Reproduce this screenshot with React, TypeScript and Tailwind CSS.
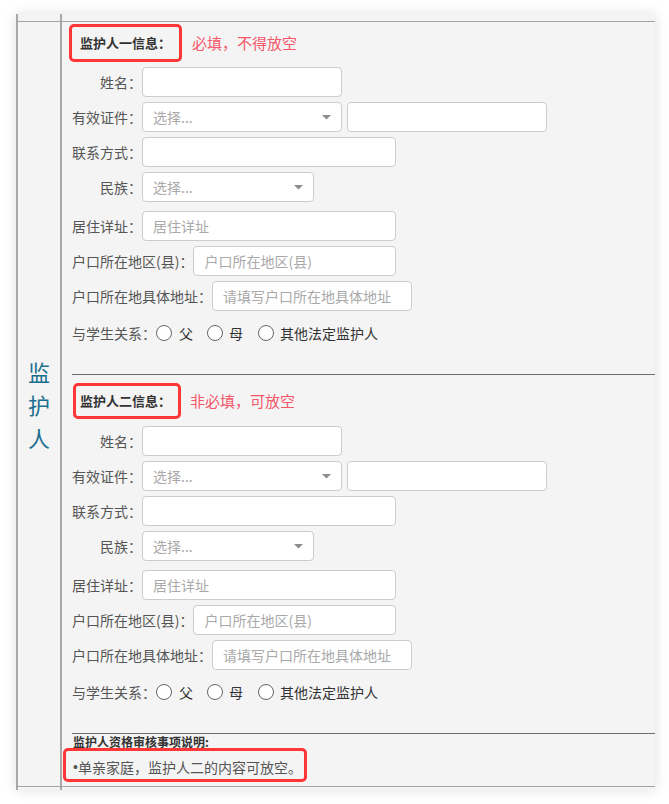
import React from "react";

const inputCls =
  "h-[30px] shrink-0 rounded-[4px] border border-[#cccccc] bg-white px-[10px] text-[14px] text-[#555] placeholder:text-[#a9a9a9] outline-none";

function Caret() {
  return (
    <svg width="9" height="5" viewBox="0 0 9 5" className="shrink-0">
      <path d="M0 0 L9 0 L4.5 4.5 Z" fill="#8c8c8c" />
    </svg>
  );
}

function FakeSelect({ w }: { w: string }) {
  return (
    <div
      className={`${w} flex h-[30px] shrink-0 items-center justify-between rounded-[4px] border border-[#cccccc] bg-white pl-[10px] pr-[10px] text-[14px] text-[#a9a9a9]`}
    >
      <span>选择...</span>
      <Caret />
    </div>
  );
}

function FixedLabel({ children }: { children: React.ReactNode }) {
  return <span className="w-[70px] shrink-0 text-right text-[14px] text-[#555]">{children}</span>;
}

function InlineLabel({ children }: { children: React.ReactNode }) {
  return <span className="shrink-0 text-[14px] text-[#555]">{children}</span>;
}

function Radio() {
  return <span className="h-[16px] w-[16px] shrink-0 rounded-full border border-[#666] bg-white" />;
}

function Rows() {
  return (
    <div className="flex flex-col gap-[5px]">
      <div className="flex h-[30px] items-center">
        <FixedLabel>姓名：</FixedLabel>
        <input className={`${inputCls} w-[200px]`} />
      </div>
      <div className="flex h-[30px] items-center">
        <FixedLabel>有效证件：</FixedLabel>
        <FakeSelect w="w-[200px]" />
        <input className={`${inputCls} ml-[5px] w-[200px]`} />
      </div>
      <div className="flex h-[30px] items-center">
        <FixedLabel>联系方式：</FixedLabel>
        <input className={`${inputCls} w-[254px]`} />
      </div>
      <div className="flex h-[30px] items-center">
        <FixedLabel>民族：</FixedLabel>
        <FakeSelect w="w-[172px]" />
      </div>
      <div className="mt-[4px] flex h-[30px] items-center">
        <InlineLabel>居住详址：</InlineLabel>
        <input className={`${inputCls} w-[254px]`} placeholder="居住详址" />
      </div>
      <div className="flex h-[30px] items-center">
        <InlineLabel>户口所在地区(县)：</InlineLabel>
        <input className={`${inputCls} w-[203px]`} placeholder="户口所在地区(县)" />
      </div>
      <div className="flex h-[30px] items-center">
        <InlineLabel>户口所在地具体地址：</InlineLabel>
        <input className={`${inputCls} w-[200px]`} placeholder="请填写户口所在地具体地址" />
      </div>
      <div className="mt-[2px] flex h-[30px] items-center text-[14px]">
        <InlineLabel>与学生关系：</InlineLabel>
        <Radio />
        <span className="ml-[7px] text-[#333]">父</span>
        <span className="ml-[14px] flex items-center">
          <Radio />
        </span>
        <span className="ml-[6px] text-[#333]">母</span>
        <span className="ml-[15px] flex items-center">
          <Radio />
        </span>
        <span className="ml-[6px] text-[#333]">其他法定监护人</span>
      </div>
    </div>
  );
}

function Side() {
  return <div className="w-[46px] shrink-0 border-x-2 border-[#a8a8a8]" />;
}

export default function App() {
  return (
    <div className="min-h-[804px] bg-white pl-[16px] pt-[14px] font-['Noto_Sans_CJK_SC','Microsoft_YaHei',sans-serif]">
      <div className="w-[639px] bg-[#f4f4f4] shadow-[0_0_12px_rgba(0,0,0,0.13)]">
        <div className="flex h-[7px]">
          <Side />
        </div>
        <div className="flex border-y border-[#a3a3a3]">
          <div className="flex w-[46px] shrink-0 items-center justify-center border-x-2 border-[#a8a8a8]">
            <div className="w-[22px] text-center text-[22px] leading-[33px] text-[#1b6f8f]">
              监<br />护<br />人
            </div>
          </div>
          <div className="flex-1 pl-[10px]">
            {/* Section 1 */}
            <div className="mt-[2px] flex items-center">
              <div className="-ml-[3px] inline-flex h-[38px] items-center rounded-[5px] border-[3px] border-[#ff3636] pl-[8px] pr-[8px] text-[13px] font-bold text-[#333]">
                监护人一信息：
              </div>
              <span className="ml-[10px] text-[15px] text-[#f4566a]">必填，不得放空</span>
            </div>
            <div className="mt-[5px]">
              <Rows />
            </div>
            <div className="mt-[26px] border-t border-[#6e6e6e]" />
            {/* Section 2 */}
            <div className="mt-[8px] flex items-center">
              <div className="ml-[1px] inline-flex h-[36px] items-center rounded-[5px] border-[3px] border-[#ff3636] pl-[4px] pr-[7px] text-[13px] font-bold text-[#333]">
                监护人二信息：
              </div>
              <span className="ml-[9px] text-[15px] text-[#f4566a]">非必填，可放空</span>
            </div>
            <div className="mt-[7px]">
              <Rows />
            </div>
            <div className="mt-[26px] border-t border-[#6e6e6e]" />
            <div className="h-[14px] pl-[1px] text-[12px] font-bold leading-[16px] text-[#333]">
              监护人资格审核事项说明:
            </div>
            <div className="relative flex h-[38px] items-center pl-[1px] text-[14px] text-[#555]">
              <span className="font-['Liberation_Sans',sans-serif]">•</span>
              <span>单亲家庭，监护人二的内容可放空。</span>
              <div className="absolute left-[-9px] top-0 h-[34px] w-[244px] rounded-[5px] border-[3px] border-[#ff3636]" />
            </div>
          </div>
        </div>
        <div className="flex h-[3px]">
          <Side />
        </div>
      </div>
    </div>
  );
}
